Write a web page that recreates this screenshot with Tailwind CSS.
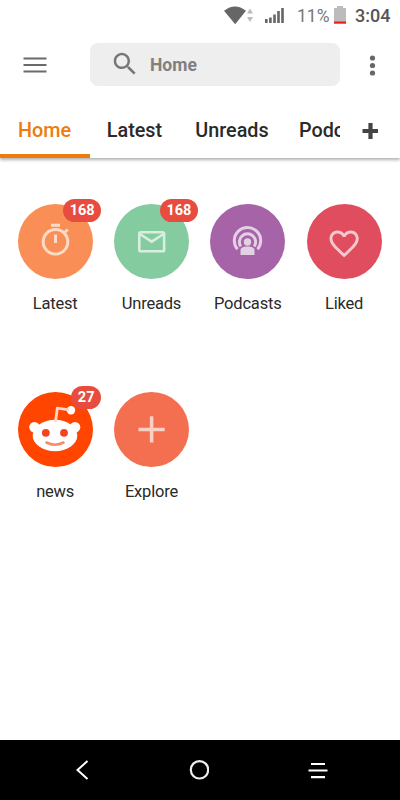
<!DOCTYPE html>
<html lang="en">
<head>
<meta charset="utf-8">
<title>Home</title>
<script src="https://cdn.jsdelivr.net/npm/@tailwindcss/browser@4"></script>
</head>
<body class="bg-white">
<div class="w-[400px] h-[800px] flex flex-col overflow-hidden bg-white font-[Roboto,sans-serif] text-[#2a2a2a]">
  <!-- Status bar -->
  <div class="h-8 flex items-center justify-end pr-[10px] text-[#666]">
    <svg class="w-[30px] h-5 mr-[11px]" viewBox="0 0 30 20"><path d="M0 4.800Q11-3.800 22 4.800L11.200 18.300Z" fill="#666"/><path d="M23 7.600L26 2.500L29 7.600ZM23 11L26 16L29 11Z" fill="#bbb"/></svg>
    <svg class="w-5 h-5 mr-[12px]" viewBox="0 0 20 20"><path d="M0 13h2.600v4H0zM4.100 11.500h2.600v5.500h-2.600zM8.200 8.500h2.600V17h-2.600zM12.200 5h2.600v12h-2.600zM16.200 2h2.600v15h-2.600z" fill="#666"/></svg>
    <span class="text-[17.500px] leading-8 text-[#777] w-[33px] whitespace-nowrap">11%</span>
    <svg class="w-3 h-5 ml-[4px] mr-[9px]" viewBox="0 0 12 20"><path d="M3 0h6v2h3v16H0V2h3z" fill="#bcbcbc"/><path d="M0 15.500h12V17.500H0z" fill="#f51818"/></svg>
    <span class="text-[18px] leading-8 font-medium text-[#555] w-[35px] whitespace-nowrap">3:04</span>
  </div>
  <!-- Search bar -->
  <div class="h-[66px] flex items-center">
    <svg class="ml-[23px] w-6 h-4" viewBox="0 0 24 16"><path d="M0.500 1.500h23M0.500 8h23M0.500 14.500h23" stroke="#6b6b6b" stroke-width="2"/></svg>
    <div class="ml-[43px] w-[250px] h-[43px] rounded-[8px] bg-[#eee] flex items-center -mt-px">
      <svg class="ml-[20px] mb-[2px] w-[30px] h-[30px]" viewBox="0 0 24 24" fill="#777"><path d="M15.500 14h-.79l-.28-.27C15.410 12.590 16 11.110 16 9.500 16 5.910 13.090 3 9.500 3S3 5.910 3 9.500 5.910 16 9.500 16c1.610 0 3.090-.59 4.230-1.570l.27.28v.79l5 4.990L20.490 19l-4.990-5zm-6 0C7.010 14 5 11.990 5 9.500S7.010 5 9.500 5 14 7.010 14 9.500 11.990 14 9.500 14z"/></svg>
      <span class="ml-[10px] mt-[2px] text-[17.500px] font-bold text-[#808080]">Home</span>
    </div>
    <svg class="ml-[29px] w-[7px] h-[21px]" viewBox="0 0 7 21" fill="#666"><circle cx="3.500" cy="3" r="2.600"/><circle cx="3.500" cy="10.500" r="2.600"/><circle cx="3.500" cy="18" r="2.600"/></svg>
  </div>
  <!-- Tabs -->
  <div class="h-[59.500px] mb-[0.500px] shrink-0 flex bg-white shadow-[0_2px_3px_rgba(0,0,0,.3)] [clip-path:inset(0_0_-8px_0)] text-[19.800px] font-medium leading-[24px]">
    <div class="w-[340px] flex overflow-hidden whitespace-nowrap">
      <div class="w-[90px] pr-px shrink-0 pt-[21px] text-center text-[#ee7b0b] border-b-4 border-[#ee7b0b]">Home</div>
      <div class="w-[89px] shrink-0 pt-[21px] text-center">Latest</div>
      <div class="w-[106px] shrink-0 pt-[21px] text-center">Unreads</div>
      <div class="shrink-0 pt-[21px] pl-[14px]">Podcasts</div>
    </div>
    <svg class="ml-[22px] mt-[25px] w-4 h-4" viewBox="0 0 16 16"><path d="M0.500 8h16M8.500 0v16" stroke="#444" stroke-width="4.200"/></svg>
  </div>
  <!-- Shortcuts -->
  <div class="grow pt-[46px] pl-[7px]">
    <div class="grid grid-cols-[repeat(4,96.300px)] auto-rows-[187.500px] text-[16.500px] tracking-[-0.200px] leading-5">
      <div class="flex flex-col items-center">
        <div class="relative size-[75px] rounded-full bg-[#f98f56]">
          <svg class="size-full" viewBox="0 0 75 75" fill="none" stroke="#fddac6" stroke-width="3"><circle cx="37.500" cy="37.800" r="12.300"/><path d="M33 21.200h9M37.500 30.500v8.500M46.500 28.500l3.300-3"/></svg>
          <span class="absolute left-[45.500px] -top-[5.500px] w-[38px] h-[23px] rounded-full bg-[#e74c3f] text-white text-[14.500px] tracking-normal leading-[24px] font-bold text-center">168</span>
        </div>
        <span class="mt-[15px]">Latest</span>
      </div>
      <div class="flex flex-col items-center">
        <div class="relative size-[75px] rounded-full bg-[#85cba0]">
          <svg class="size-full" viewBox="0 0 75 75" fill="none" stroke="#d7efdf" stroke-width="2.600"><rect x="25.300" y="28.300" width="24.800" height="19" rx="1.300"/><path d="M25.800 30l11.900 7.700L49.600 30"/></svg>
          <span class="absolute left-[46px] -top-[5.500px] w-[38px] h-[23px] rounded-full bg-[#e74c3f] text-white text-[14.500px] tracking-normal leading-[24px] font-bold text-center">168</span>
        </div>
        <span class="mt-[15px]">Unreads</span>
      </div>
      <div class="flex flex-col items-center">
        <div class="size-[75px] rounded-full bg-[#a663a8]">
          <svg class="size-full" viewBox="0 0 75 75" fill="none" stroke="#e4d0e5" stroke-width="3"><path d="M27.500 45.300A13.200 13.200 0 1 1 47.500 45.300M30.800 42.500A8.100 8.100 0 1 1 44.200 42.500"/><g fill="#e4d0e5" stroke="none"><circle cx="37.500" cy="38" r="3.700"/><path d="M30.500 51v-4.500c0-3 2.500-4 7-4s7 1 7 4V51z"/></g></svg>
        </div>
        <span class="mt-[15px]">Podcasts</span>
      </div>
      <div class="flex flex-col items-center">
        <div class="size-[75px] rounded-full bg-[#e04d5f]">
          <svg class="size-full" viewBox="0 0 75 75"><path transform="translate(19.600 22.200) scale(1.460)" fill="#f6c8ce" d="M16.500 3c-1.740 0-3.410.81-4.500 2.090C10.910 3.810 9.240 3 7.500 3 4.420 3 2 5.420 2 8.500c0 3.780 3.400 6.860 8.550 11.540L12 21.350l1.450-1.320C18.600 15.360 22 12.280 22 8.500 22 5.420 19.580 3 16.500 3zm-4.400 15.550l-.1.100-.1-.1C7.140 14.240 4 11.390 4 8.500 4 6.500 5.500 5 7.500 5c1.540 0 3.040.99 3.570 2.360h1.870C13.460 5.990 14.960 5 16.500 5c2 0 3.500 1.500 3.500 3.500 0 2.890-3.140 5.740-7.900 10.050z"/></svg>
        </div>
        <span class="mt-[15px]">Liked</span>
      </div>
      <div class="flex flex-col items-center">
        <div class="relative size-[75px] rounded-full bg-[#ff4500]">
          <svg class="size-full" viewBox="0 0 75 75"><g fill="#fff"><ellipse cx="37" cy="43.500" rx="22.300" ry="15.700"/><circle cx="16.500" cy="35.300" r="5.300"/><circle cx="57" cy="35.300" r="5.300"/><circle cx="53" cy="18.300" r="4.200"/></g><path d="M37.500 30l1.800-13.800 12 1.600" fill="none" stroke="#ffd6c8" stroke-width="2.800" stroke-linejoin="round"/><circle cx="27.800" cy="40.800" r="3.900" fill="#f34420"/><circle cx="46" cy="40.800" r="3.900" fill="#f34420"/><path d="M28.500 50.500q8.500 4.500 17 0" fill="none" stroke="#fa8a68" stroke-width="2.600" stroke-linecap="round"/></svg>
          <span class="absolute left-[53.500px] -top-[5.500px] w-[30px] h-[23px] rounded-full bg-[#e74c3f] text-white text-[14.500px] tracking-normal leading-[24px] font-bold text-center">27</span>
        </div>
        <span class="mt-[15px]">news</span>
      </div>
      <div class="flex flex-col items-center">
        <div class="size-[75px] rounded-full bg-[#f36f50]">
          <svg class="size-full" viewBox="0 0 75 75"><path d="M24.500 37.500h26.200M37.600 24.300v26.200" stroke="#fbcfc4" stroke-width="3.500"/></svg>
        </div>
        <span class="mt-[15px]">Explore</span>
      </div>
    </div>
  </div>
  <!-- Navigation bar -->
  <div class="h-[60px] shrink-0 bg-black flex items-center justify-between pl-[75px] pr-[72px]">
    <svg class="w-[14px] h-5" viewBox="0 0 14 20" fill="none" stroke="#fff" stroke-width="2"><path d="M12.500 1L2.500 10l10 9"/></svg>
    <svg class="w-5 h-5" viewBox="0 0 20 20" fill="none" stroke="#eee" stroke-width="2.200"><circle cx="10.500" cy="9.800" r="8.700"/></svg>
    <svg class="w-5 h-5" viewBox="0 0 20 20" stroke="#fff" stroke-width="2.200"><path d="M3 4h14M.5 10.500h19M3 17.200h14"/></svg>
  </div>
</div>
</body>
</html>
